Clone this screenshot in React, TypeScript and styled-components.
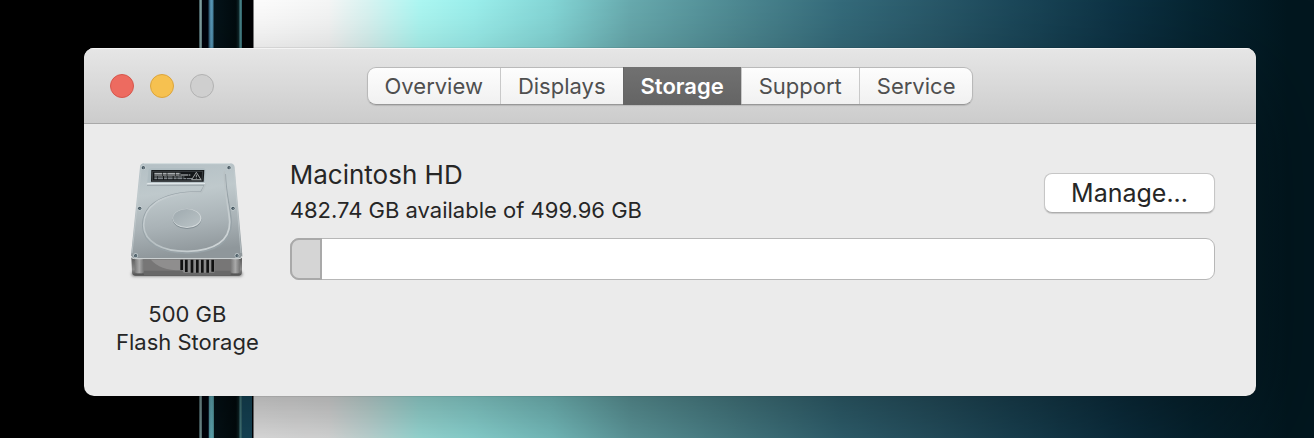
import React, { useState } from "react";
import styled, { createGlobalStyle } from "styled-components";

const GlobalStyle = createGlobalStyle`
  * { box-sizing: border-box; }
  body {
    margin: 0;
    font-family: Inter, "Liberation Sans", sans-serif;
    color: #262626;
    background: #02161f;
  }
`;

const Desktop = styled.div`
  min-height: 100vh;
  padding: 48px 58px 42px 84px;
  background:
    linear-gradient(to bottom, transparent 60%, rgba(30, 95, 120, 0.8) 90%) 242px 0 / 10px 100% no-repeat,
    linear-gradient(to bottom, transparent 60%, rgba(120, 215, 215, 0.6) 90%) 209px 0 / 5px 100% no-repeat,
    linear-gradient(
      to right,
      #000 199px,
      #31484c 199px,
      #9bbcbd 201px,
      #31484c 202px,
      #01030c 202px,
      #01030c 208px,
      #28506a 209px,
      #5c9dbd 211px,
      #4a86a3 213px,
      #05141a 214px,
      #020b0e 236px,
      #10292c 239px,
      #4f8b90 240px,
      #2f6068 242px,
      #000204 242px,
      #000204 253px,
      transparent 254px
    ),
    linear-gradient(
      to right,
      #ffffff 20%,
      #f8f9f9 25%,
      #dcf7f5 28%,
      #aefaf5 32%,
      #9df2ef 36%,
      #86d9d9 42%,
      #69acb0 48%,
      #4f8b94 56%,
      #356c7c 64%,
      #29596a 71%,
      #1c495b 77%,
      #0d3345 85%,
      #062532 91%,
      #02171f 98%
    );
`;

const Window = styled.main`
  border-radius: 10px;
  background: #ebebeb;
  overflow: hidden;
  box-shadow:
    0 0 1px rgba(0, 0, 0, 0.7),
    0 34px 100px rgba(0, 0, 0, 0.4);
`;

const TitleBar = styled.header`
  display: grid;
  grid-template-columns: 1fr auto 1fr;
  align-items: center;
  height: 76px;
  padding: 0 26px;
  border-bottom: 1px solid #a9a9a9;
  background: linear-gradient(#e6e6e6, #cccccc);
  box-shadow: inset 0 1px #f4f4f4;
`;

const WindowControls = styled.div`
  display: flex;
  gap: 16px;
`;

const ControlButton = styled.button<{ $fill: string; $edge: string }>`
  width: 24px;
  height: 24px;
  padding: 0;
  border: 1px solid ${(p) => p.$edge};
  border-radius: 50%;
  background: ${(p) => p.$fill};
`;

const Tabs = styled.nav`
  display: flex;
  height: 38px;
  border: 1px solid #b9b9b9;
  border-bottom-color: #989898;
  border-radius: 9px;
  background: linear-gradient(#fdfdfd, #f1f1f1);
  box-shadow: 0 1px 1px rgba(0, 0, 0, 0.12);
`;

const Tab = styled.button<{ $active: boolean }>`
  margin: ${(p) => (p.$active ? "-1px 0" : "0")};
  padding: 0 17px;
  border: 0;
  border-left: 1px solid ${(p) => (p.$active ? "#666" : "#c9c9c9")};
  background: ${(p) => (p.$active ? "linear-gradient(#717171, #646464)" : "transparent")};
  color: ${(p) => (p.$active ? "#fff" : "#4f4f4f")};
  font: ${(p) => (p.$active ? 600 : 400)} 22px/36px Inter, "Liberation Sans", sans-serif;

  &:first-child { border-left: 0; }
`;

const Content = styled.section`
  display: flex;
  gap: 31px;
  padding: 36px 41px 40px 32px;
`;

const Drive = styled.figure`
  display: flex;
  flex: none;
  flex-direction: column;
  align-items: center;
  gap: 20px;
  margin: 0;
`;

const DriveCaption = styled.figcaption`
  font-size: 22px;
  line-height: 28px;
  text-align: center;
`;

const Volume = styled.div`
  flex: 1;
  min-width: 0;
`;

const VolumeHeader = styled.div`
  display: flex;
  align-items: center;
  justify-content: space-between;
  min-height: 66px;
  margin-bottom: 12px;
`;

const VolumeInfo = styled.div`
  display: grid;
  gap: 6px;
  padding-bottom: 2px;
`;

const VolumeName = styled.h1`
  margin: 0;
  font-size: 26px;
  font-weight: 400;
  line-height: 30px;
`;

const VolumeSpace = styled.p`
  margin: 0;
  font-size: 22px;
  line-height: 28px;
`;

const ManageButton = styled.button`
  height: 40px;
  padding: 0 26px;
  border: 1px solid #c6c6c6;
  border-bottom-color: #adadad;
  border-radius: 8px;
  background: #fff;
  box-shadow: 0 1px 1px rgba(0, 0, 0, 0.14);
  color: #262626;
  font: 400 25px/36px Inter, "Liberation Sans", sans-serif;
`;

const UsageBar = styled.div`
  display: flex;
  height: 42px;
  border: 1px solid #b7b7b7;
  border-radius: 9px;
  background: #fff;
`;

const UsageFill = styled.div`
  margin: -1px 0 -1px -1px;
  border: 2px solid #a9a9a9;
  border-radius: 9px 0 0 9px;
  background: #d5d5d5;
`;

const screws = [
  [73, 38], [330, 38], [62, 160], [342, 160], [50, 302], [354, 302],
];

function DriveIcon() {
  return (
    <svg width="120" height="120" viewBox="24 15 360 360" role="img" aria-label="Internal hard drive">
      <defs>
        <linearGradient id="plate" x1="0" y1="0" x2="0.15" y2="1">
          <stop offset="0" stopColor="#b3bfc4" />
          <stop offset="0.35" stopColor="#bfc9cc" />
          <stop offset="0.7" stopColor="#a9b2b6" />
          <stop offset="1" stopColor="#8f979b" />
        </linearGradient>
        <linearGradient id="base" x1="0" y1="0" x2="0" y2="1">
          <stop offset="0" stopColor="#5a5a5a" />
          <stop offset="0.65" stopColor="#8b8b8b" />
          <stop offset="1" stopColor="#4c4c4c" />
        </linearGradient>
        <linearGradient id="post" x1="0" y1="0" x2="1" y2="0">
          <stop offset="0" stopColor="#777" />
          <stop offset="0.5" stopColor="#a9a9a9" />
          <stop offset="1" stopColor="#737373" />
        </linearGradient>
        <linearGradient id="hub" x1="0" y1="0" x2="1" y2="1">
          <stop offset="0" stopColor="#9faaaf" />
          <stop offset="1" stopColor="#bac3c6" />
        </linearGradient>
        <linearGradient id="groove" x1="0" y1="0" x2="1" y2="1">
          <stop offset="0" stopColor="#d8dfe2" />
          <stop offset="0.5" stopColor="#b7c0c3" />
          <stop offset="1" stopColor="#d3d9db" />
        </linearGradient>
        <filter id="soft" x="-10%" y="-100%" width="120%" height="300%">
          <feGaussianBlur stdDeviation="4" />
        </filter>
      </defs>
      <rect x="38" y="350" width="332" height="14" rx="6" fill="#777" filter="url(#soft)" />
      <path d="M37 308H369V351Q369 362 358 362H50Q39 362 39 351Z" fill="url(#base)" />
      <path d="M75 314H340V352H75Z" fill="#777676" />
      <path d="M75 314H186V346Q122 346 96 314Z" fill="#8f8e8e" />
      <path d="M75 347H335V361H75Z" fill="#686868" />
      <rect x="47" y="312" width="28" height="43" rx="7" fill="url(#post)" />
      <rect x="335" y="312" width="28" height="43" rx="7" fill="url(#post)" />
      <path d="M184 314H286V353H194L184 338Z" fill="#898989" />
      <path d="M188 314V345M202 314V351M219 314V353M235 314V353M250 314V353M266 314V353M281 314V350" stroke="#111" strokeWidth="8" />
      <path d="M75 25H334Q345 25 347 36L370 300Q371 311 360 311H45Q35 311 36 300L63 36Q64 25 75 25Z" fill="url(#plate)" />
      <path d="M75 26H334" stroke="#dfe7e9" strokeWidth="2" />
      <path d="M37 303Q37 311 47 311H360Q369 311 369 303" fill="none" stroke="#d8dddd" strokeWidth="3" />
      <path d="M67 36L39 294M345 43L366 294" fill="none" stroke="#c3cccf" strokeWidth="2" />
      <path d="M88 48Q89 40 97 40H252Q260 40 260 48L257 90H84Z" fill="#afbcc1" />
      <path d="M84 90H257L246 110C112 111 70 160 71 213C72 265 127 296 207 294C292 292 338 260 337 202C336 162 321 123 319 57" fill="none" stroke="#98a3a8" strokeWidth="4" />
      <path d="M83 87H260L248 112C114 113 74 160 74 211C75 261 130 290 207 289C288 287 333 256 332 201C330 161 317 120 316 48" fill="none" stroke="url(#groove)" strokeWidth="5" strokeLinejoin="round" />
      <path d="M85 85H258" stroke="#e6ecee" strokeWidth="3" />
      <ellipse cx="204" cy="193" rx="43" ry="29" fill="#838e94" />
      <ellipse cx="204" cy="190" rx="43" ry="29" fill="#d3d9db" />
      <ellipse cx="203" cy="189" rx="41" ry="27" fill="url(#hub)" />
      <path d="M97 45H256L254 80H96Z" fill="#141719" />
      <path d="M101 49H251L249 77H100Z" fill="none" stroke="#899196" strokeWidth="1" />
      <path d="M106 55H185M106 60H214" stroke="#c9ced0" strokeWidth="3" strokeDasharray="23 2 12 2" />
      <path d="M106 66H196M106 71H240" stroke="#929a9e" strokeWidth="3" strokeDasharray="9 2 15 3" />
      <path d="M232 52L246 74H218Z" fill="#16191b" stroke="#e2e5e6" strokeWidth="2" strokeLinejoin="round" />
      <path d="M232 59V67M232 70V72" stroke="#e2e5e6" strokeWidth="2" />
      {screws.map(([x, y]) => (
        <g key={`${x}-${y}`}>
          <circle cx={x} cy={y} r="7" fill="#c8d2d5" />
          <circle cx={x} cy={y} r="5" fill="#46565f" />
          <circle cx={x + 1} cy={y + 1} r="2" fill="#84949b" />
        </g>
      ))}
    </svg>
  );
}

const tabs = ["Overview", "Displays", "Storage", "Support", "Service"];
const totalSpace = 499.96;
const freeSpace = 482.74;

export default function App() {
  const [active, setActive] = useState("Storage");
  const used = ((totalSpace - freeSpace) / totalSpace) * 100;

  return (
    <>
      <GlobalStyle />
      <Desktop>
        <Window>
          <TitleBar>
            <WindowControls>
              <ControlButton $fill="#ed6b60" $edge="#d6574d" aria-label="Close" />
              <ControlButton $fill="#f6c150" $edge="#dca53c" aria-label="Minimize" />
              <ControlButton $fill="#cfcfcf" $edge="#b2b2b2" aria-label="Zoom" disabled />
            </WindowControls>
            <Tabs aria-label="About This Mac">
              {tabs.map((tab) => (
                <Tab key={tab} $active={tab === active} aria-pressed={tab === active} onClick={() => setActive(tab)}>
                  {tab}
                </Tab>
              ))}
            </Tabs>
          </TitleBar>
          <Content>
            <Drive>
              <DriveIcon />
              <DriveCaption>
                500 GB
                <br />
                Flash Storage
              </DriveCaption>
            </Drive>
            <Volume>
              <VolumeHeader>
                <VolumeInfo>
                  <VolumeName>Macintosh HD</VolumeName>
                  <VolumeSpace>{freeSpace} GB available of {totalSpace} GB</VolumeSpace>
                </VolumeInfo>
                <ManageButton>Manage...</ManageButton>
              </VolumeHeader>
              <UsageBar role="meter" aria-label="Used storage" aria-valuemin={0} aria-valuemax={100} aria-valuenow={used}>
                <UsageFill style={{ width: `${used}%` }} />
              </UsageBar>
            </Volume>
          </Content>
        </Window>
      </Desktop>
    </>
  );
}
